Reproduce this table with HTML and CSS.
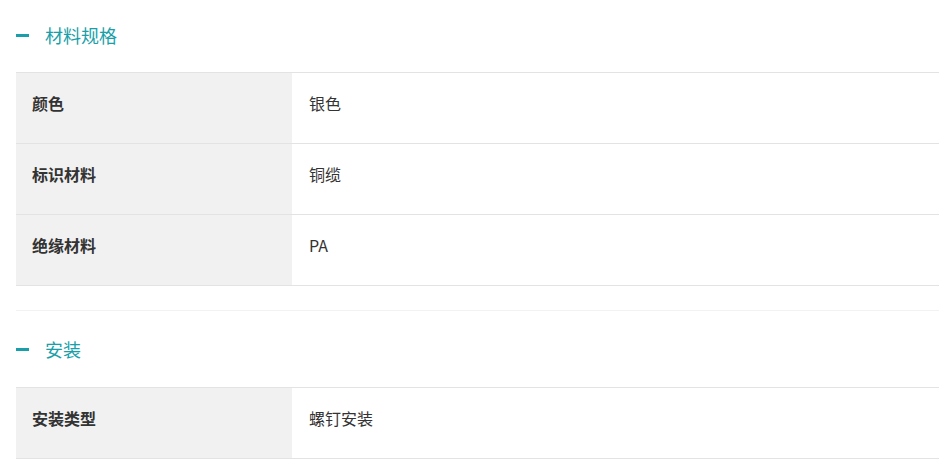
FILE: index.html
```html
<!DOCTYPE html>
<html lang="zh">
<head>
<meta charset="utf-8">
<link rel="stylesheet" href="styles.css">
</head>
<body>
<div class="page">
  <section class="section first">
    <div class="sec-head"><span class="dash"></span><span class="sec-title">材料规格</span></div>
    <div class="table">
      <div class="row"><div class="label">颜色</div><div class="value">银色</div></div>
      <div class="row"><div class="label">标识材料</div><div class="value">铜缆</div></div>
      <div class="row"><div class="label">绝缘材料</div><div class="value">PA</div></div>
    </div>
  </section>
  <section class="section">
    <div class="sec-head"><span class="dash"></span><span class="sec-title">安装</span></div>
    <div class="table">
      <div class="row"><div class="label">安装类型</div><div class="value">螺钉安装</div></div>
    </div>
  </section>
</div>
</body>
</html>
```
FILE: styles.css
```css
html, body {
  margin: 0;
  padding: 0;
  background: #fff;
}
body {
  font-family: "Noto Sans CJK SC", "Liberation Sans", sans-serif;
  color: #333;
}
.page {
  padding: 0 11px 0 16px;
}
.section {
  border-top: 1px solid #f2f2f2;
  padding-bottom: 24px;
}
.section.first {
  border-top: none;
}
.sec-head {
  height: 76px;
  display: flex;
  align-items: center;
  box-sizing: border-box;
}
.first .sec-head {
  height: 72px;
  padding-bottom: 2px;
}
.dash {
  width: 13px;
  height: 3px;
  background: #199fa9;
  margin-right: 16px;
}
.sec-title {
  font-size: 18px;
  color: #199fa9;
  line-height: 24px;
}
.table {
  border-top: 1px solid #e3e3e3;
}
.row {
  display: flex;
  height: 71px;
  border-bottom: 1px solid #e3e3e3;
  box-sizing: border-box;
}
.label {
  width: 276px;
  background: #f1f1f1;
  font-weight: bold;
  font-size: 16px;
  line-height: 24px;
  padding: 18px 16px 0;
  box-sizing: border-box;
}
.value {
  flex: 1;
  font-size: 16px;
  line-height: 24px;
  padding: 18px 17px 0;
}
```
